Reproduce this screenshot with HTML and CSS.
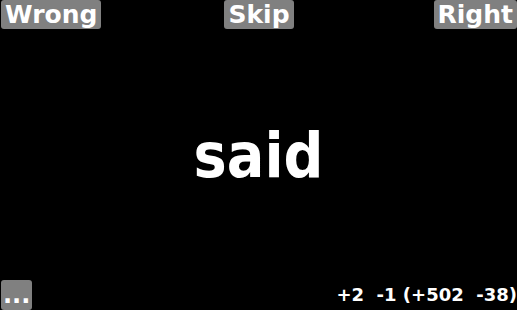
FILE: index.html
```html
<!DOCTYPE html>
<html>
<head>
<meta charset="utf-8">
<link rel="stylesheet" href="styles.css">
</head>
<body>
<div class="screen">
  <div class="top">
    <div class="btn btn-left">Wrong</div>
    <div class="btn">Skip</div>
    <div class="btn btn-right">Right</div>
  </div>
  <div class="word">said</div>
  <div class="bottom">
    <div class="btn btn-more">...</div>
    <div class="score">+2  -1 (+502  -38)</div>
  </div>
</div>
</body>
</html>
```
FILE: styles.css
```css
html, body {
  margin: 0;
  padding: 0;
  background: #000;
}
.screen {
  width: 517px;
  height: 310px;
  display: flex;
  flex-direction: column;
  font-family: "DejaVu Sans", Verdana, sans-serif;
  font-weight: bold;
  color: #fff;
  overflow: hidden;
}
.top {
  display: grid;
  grid-template-columns: 1fr auto 1fr;
  align-items: start;
  padding-left: 1px;
}
.btn-left {
  justify-self: start;
}
.btn-right {
  justify-self: end;
}
.btn {
  background: #808080;
  color: #fff;
  font-size: 25px;
  line-height: 29px;
  height: 29px;
  padding: 0 4px;
  border-radius: 3px;
}
.word {
  flex: 1;
  display: flex;
  align-items: center;
  justify-content: center;
  font-family: "DejaVu Sans Condensed", "DejaVu Sans", sans-serif;
  font-stretch: condensed;
  font-size: 62px;
  padding-top: 2px;
}
.bottom {
  display: flex;
  justify-content: space-between;
  align-items: flex-end;
  padding-left: 1px;
}
.bottom .btn-more {
  height: 30px;
  line-height: 30px;
  font-size: 24px;
  padding: 0 2px;
}
.score {
  font-size: 18px;
  line-height: 20px;
  white-space: pre;
  padding-bottom: 5px;
}
```
